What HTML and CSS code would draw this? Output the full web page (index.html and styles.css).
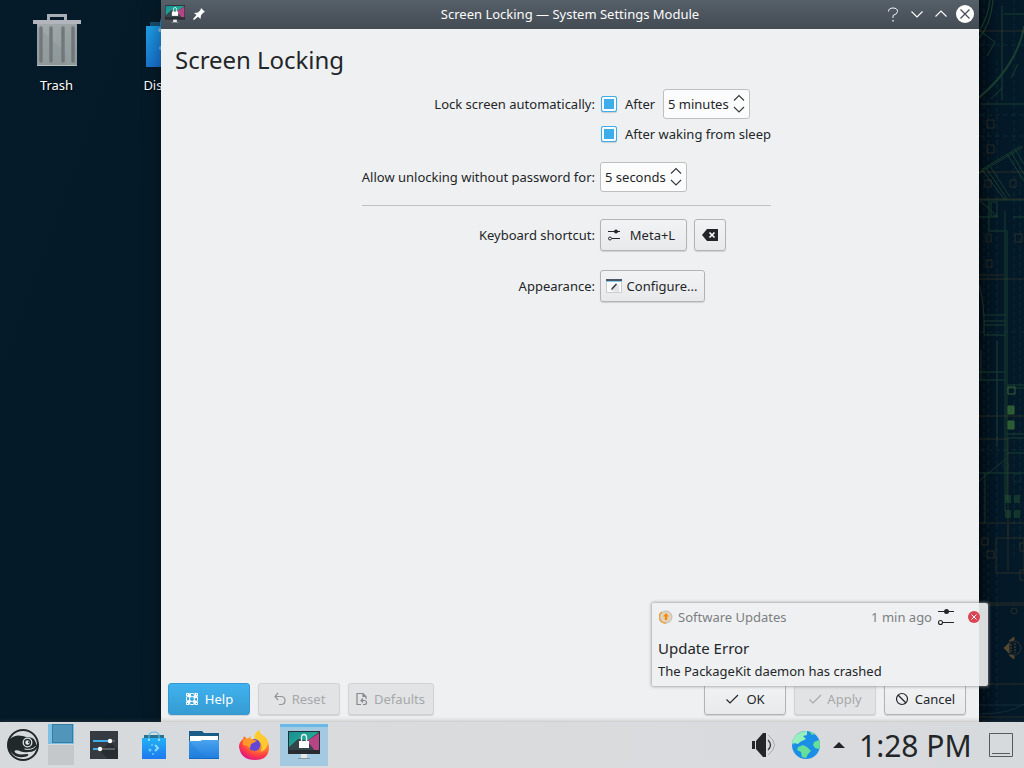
FILE: index.html
```html
<!DOCTYPE html>
<html lang="en">
<head>
<meta charset="utf-8">
<title>Screen Locking</title>
<link rel="stylesheet" href="styles.css">
</head>
<body>
<svg class="defs" width="0" height="0" aria-hidden="true">
  <defs>
    <linearGradient id="teal" x1="0" y1="0" x2="1" y2="1"><stop offset="0" stop-color="#168d94"/><stop offset="1" stop-color="#2fbf92"/></linearGradient>
    <linearGradient id="blue" x1="0" y1="0" x2="0" y2="1"><stop offset="0" stop-color="#22b1f7"/><stop offset="1" stop-color="#1d78ee"/></linearGradient>
    <linearGradient id="folder" x1="0" y1="0" x2="0" y2="1"><stop offset="0" stop-color="#4aa4ee"/><stop offset="1" stop-color="#1f7be0"/></linearGradient>
    <linearGradient id="deep" x1="0" y1="0" x2="1" y2="1"><stop offset="0" stop-color="#1d9fe6"/><stop offset="1" stop-color="#1450b8"/></linearGradient>
    <linearGradient id="metal" x1="0" y1="0" x2="1" y2="1"><stop offset="0" stop-color="#a5abae"/><stop offset="1" stop-color="#8e9998"/></linearGradient>
    <symbol id="locker" viewBox="0 0 32 28">
      <rect width="32" height="23" fill="#272c30"/>
      <path d="M1 1h30v18H1z" fill="#29343b"/>
      <path d="M1 1h30L19 10 11 8 1 17z" fill="url(#teal)"/>
      <path d="M31 2v17h-5L19 10z" fill="#b64585"/>
      <path d="M10 8l9 2 7 9H1v-3z" fill="#34454b"/>
      <path d="M13.500 11V6.500q0-3 2.500-3t2.500 3V11" fill="none" stroke="#eef4f5" stroke-width="1.300"/>
      <rect x="11" y="10" width="10" height="7" fill="#fff"/>
      <path d="M13 23h6v4h-6z" fill="#e5e8e9"/><path d="M10 27h12v1H10z" fill="#8b979d"/>
    </symbol>
    <symbol id="sliders" viewBox="0 0 18 18">
      <path d="M1 3.500h16M6 14.500H17" stroke="#232629" stroke-width="1.100"/>
      <circle cx="9.500" cy="3.500" r="2.500" fill="#232629"/><circle cx="3.500" cy="14.500" r="2" fill="none" stroke="#232629" stroke-width="1.100"/>
    </symbol>
    <symbol id="arrows" viewBox="0 0 12 20">
      <path d="M1 6.500l5-5 5 5M1 13l5 5 5-5" fill="none" stroke="#34383b" stroke-width="1.100"/>
    </symbol>
    <symbol id="check" viewBox="0 0 14 14"><path d="M1.500 7.500l3.500 3.500L13 3" fill="none" stroke="currentColor" stroke-width="1.200"/></symbol>
  </defs>
</svg>
<main class="desktop">
  <svg class="blueprint" viewBox="979 0 45 722" fill="none" stroke-width="1">
    <g stroke="#2f6336" opacity=".5">
      <path d="M990 0q-2 18-11 31M993 0q-2 24-14 38M1024 26q-8 40-45 71M1024 30q-10 40-45 68" stroke-width="1.200"/>
      <path d="M979 30l16 12-8 14M1011 78l7-14M991 99l12-12M1024 104h-43M1024 14h-20M1002 6v94"/>
      <path d="M981 170l40-24M979 173l44-26M982 170l23 30M986 168l21 31M990 166l20 31M1007 154l17 27M1011 152l13 22M1015 149l9 15M979 200h45M989 200v31h16M991 202v14h6v-14h-6M979 217h19l-18-16M1013 217h11M1005 211v300M1007 230v270"/>
      <path d="M979 285q6 18 5 50h21M984 315h22M984 321h22M984 325h22M979 380h27M979 372h27M981 380v-30M1007 385h17M1007 388h17M979 473h45M1007 434h17M1007 438h17M985 473v50M979 481l28-23M1007 453h17M997 341v105"/>
    </g>
    <g stroke="#1c4f43" opacity=".3"><path d="M984 0v722M988 100v600M997 60v650M1014 0v560M1020 150v400M979 45h45M979 115h45M979 136h45M979 332h45M979 450h45" stroke-dasharray="5 3"/><circle cx="1006" cy="466" r="3"/><circle cx="1017" cy="478" r="4"/></g>
    <g stroke="#624a26" opacity=".4"><path d="M979 31h45M979 172h45M979 199h45M979 275h25M979 279h45M979 416h45M979 439h30M1008 440v96M979 523h45M1008 525v46M979 603h45M979 605h45M979 684h45M979 717h45"/><path d="M987 120h7v8h-7zM987 145h7v8h-7zM985 180h6v7h-6zM1010 180h6v7h-6zM986 234h5v8h-5zM1015 234h7v8h-7zM986 260h6v7h-6zM982 538h6v7h-6zM987 551h7v7h-7zM996 538h28v35h-28zM1020 543h5v8h-5zM1020 570h5v10h-5z"/><circle cx="1014" cy="611" r="3"/></g>
    <g stroke="#44763a" opacity=".75"><path d="M1008 387h7v7h-7z"/><path fill="#367036" d="M1008 406h6v8h-6zM1008 421h6v8h-6z"/><path fill="#265a32" stroke="none" opacity=".6" d="M1005 495h6v8h-6zM1014 495h6v8h-6zM1005 510h6v8h-6zM1014 510h6v8h-6z"/></g>
    <g stroke="#7a5832" opacity=".7"><path fill="#7a5832" d="M1004 648l5-5v10zM1009 641l5-4v3zM1009 655l5 4v-3z"/><circle cx="1014" cy="648" r="7" opacity=".6"/><path d="M1011 644v8M1015 643v10" stroke-dasharray="2 1"/></g>
    <path d="M979 714q30 0 45-10M979 705h45" stroke="#304c50" opacity=".4"/>
  </svg>

  <section class="icons">
    <div class="launcher">
      <svg width="48" height="54" viewBox="0 0 48 54"><path d="M15.500 7V1.500h17V7" fill="none" stroke="#a8adb3" stroke-width="3"/><path d="M4 9h40v43H4z" fill="url(#metal)"/><path d="M4 12l29 27v13H4z" fill="#7e8889" opacity=".23"/><path d="M8 14v33M18 14v33M30 14v33M40 14v33" stroke="#71777b" stroke-width="3.400" stroke-linecap="round"/><path d="M0 6h48v4H0z" fill="#b2b5bb"/><path d="M4 51.500h40" stroke="#b9c0be"/></svg>
      <span>Trash</span>
    </div>
    <div class="launcher second">
      <svg width="48" height="54" viewBox="0 0 48 54"><path d="M4 13V8h11q1-6 9-8 8 2 9 8h11v5z" fill="#194d70"/><path d="M15 14V8q1-8 9-8t9 8v6" fill="none" stroke="#1987c8" stroke-width="2"/><path d="M0 12h48v41H0z" fill="url(#deep)"/><circle cx="14" cy="16" r="2" fill="#76b6df"/><circle cx="15" cy="34" r="2" fill="#68b0ef"/></svg>
      <span>Discover</span>
    </div>
  </section>

  <section class="window">
    <header class="titlebar">
      <div class="title-left"><svg width="20" height="18" preserveAspectRatio="none"><use href="#locker"/></svg><svg width="12" height="12" viewBox="0 0 12 12"><path d="M8 0l4 4-1.500.5L8 7.200 7.500 11 5 8.700 1 12l-1-1 3.500-4L1 5l4-.5L7.500 2z" fill="#fff"/></svg></div>
      <h1>Screen Locking — System Settings Module</h1>
      <div class="title-right">
        <svg width="12" height="16" viewBox="0 0 12 16" fill="none" stroke="#f2f4f5"><path d="M1.500 5.500q0-3.500 4.500-3.500t4.500 3.500Q10.500 8 6 9.500V12"/><path d="M6 14v1.500" stroke-width="1.400"/></svg>
        <svg width="12" height="12" viewBox="0 0 12 12" fill="none" stroke="#fff" stroke-width="1.100"><path d="M.5 3.500L6 9l5.500-5.500"/></svg>
        <svg width="12" height="12" viewBox="0 0 12 12" fill="none" stroke="#fff" stroke-width="1.100"><path d="M.5 8.500L6 3l5.500 5.500"/></svg>
        <svg width="18" height="18" viewBox="0 0 18 18"><circle cx="9" cy="9" r="9" fill="#fff"/><path d="M4.500 4.500l9 9M13.500 4.500l-9 9" stroke="#424a52" stroke-width="1.200"/></svg>
      </div>
    </header>
    <h2>Screen Locking</h2>
    <div class="form">
      <label>Lock screen automatically:</label>
      <div class="field"><i class="checkbox"></i><span class="after">After</span><div class="spin">5 minutes<svg width="12" height="20"><use href="#arrows"/></svg></div></div>
      <label></label>
      <div class="field"><i class="checkbox"></i><span>After waking from sleep</span></div>
      <label class="unlock">Allow unlocking without password for:</label>
      <div class="field unlock"><div class="spin">5 seconds<svg width="12" height="20"><use href="#arrows"/></svg></div></div>
      <hr>
      <label>Keyboard shortcut:</label>
      <div class="field"><button class="shortcut"><svg width="14" height="14" viewBox="0 0 14 14"><path d="M1 3.500h12M5 10.500h8" stroke="#232629" stroke-width="1.100"/><circle cx="9" cy="3.500" r="2" fill="#232629"/><circle cx="3" cy="10.500" r="1.500" fill="none" stroke="#232629"/></svg>Meta+L</button><button class="clear"><svg width="16" height="12" viewBox="0 0 16 12"><path d="M0 6l5-6h11v12H5z" fill="#232629"/><path d="M7.500 3.500l5 5M12.500 3.500l-5 5" stroke="#fff" stroke-width="1.600"/></svg></button></div>
      <label class="appearance">Appearance:</label>
      <div class="field appearance"><button class="configure"><svg width="16" height="16" viewBox="0 0 16 16"><path d="M0 1h16v14H0z" fill="#fafafa"/><path d="M0 1h16v2H0z" fill="#485763"/><path d="M0 3.500h16" stroke="#85cce8"/><path d="M.5 4v10.500h15V4" fill="none" stroke="#c9cdcf"/><path d="M5 13l6-7 2 2v6z" fill="#e0e4e4"/><path d="M5 12l.7-2L10 5.500l1 1-4.300 4.700z" fill="#31363b"/></svg>Configure...</button></div>
    </div>
    <footer class="actions">
      <button class="help"><svg width="14" height="14" viewBox="0 0 14 14" fill="none" stroke="#fff"><circle cx="7" cy="7" r="4.200" stroke-width="3.400" stroke-dasharray="3.300 3.297" stroke-dashoffset="-1.650"/><circle cx="7" cy="7" r="5.600"/><circle cx="7" cy="7" r="2.500"/><path d="M1.500 4V1.500H4M10 1.500h2.500V4M1.500 10v2.500H4M10 12.500h2.500V10"/></svg>Help</button>
      <button disabled><svg width="14" height="14" viewBox="0 0 14 14" fill="none" stroke="#929597" stroke-width="1.200"><path d="M5 1L2 4.500 5 8M2 4.500h6q4 0 4 4t-4 4H6"/></svg>Reset</button>
      <button class="defaults" disabled><svg width="14" height="14" viewBox="0 0 14 14" fill="none" stroke="#85898b" stroke-width="1.200"><path d="M6 12.500H2v-11h6l3 3V7M8 1.500v3h3M8 6.500L6 8.500l2 2M6.500 8.500h3q2 0 2 2t-2 2H8"/></svg>Defaults</button>
      <span class="spacer"></span>
      <button><svg width="14" height="14"><use href="#check"/></svg>OK</button>
      <button disabled><svg width="14" height="14"><use href="#check"/></svg>Apply</button>
      <button class="cancel"><svg width="14" height="14" viewBox="0 0 14 14" fill="none" stroke="#232629" stroke-width="1.200"><circle cx="7" cy="7" r="5.500"/><path d="M3 3l8 8"/></svg>Cancel</button>
    </footer>
  </section>

  <aside class="notification">
    <header><svg width="14" height="14" viewBox="0 0 14 14"><circle cx="7" cy="7" r="6" fill="#e4d3b7" stroke="#b7bdc1"/><path d="M7 13A6 6 0 0 1 3 2" fill="none" stroke="#f39b32" stroke-width="1.300"/><path d="M7 3l3 3.500H8.200V10H5.800V6.500H4z" fill="#f58a13"/></svg><span>Software Updates</span><time>1 min ago</time><svg class="tune" width="18" height="18" viewBox="0 0 18 18"><use href="#sliders"/></svg><svg class="dismiss" width="12" height="12" viewBox="0 0 12 12"><circle cx="6" cy="6" r="6" fill="#da4453"/><path d="M3.500 3.500l5 5M8.500 3.500l-5 5" stroke="#fff"/></svg></header>
    <h3>Update Error</h3>
    <p>The PackageKit daemon has crashed</p>
  </aside>

  <nav class="panel">
    <svg class="menu" width="32" height="32" viewBox="0 0 32 32"><circle cx="16" cy="16" r="15" fill="none" stroke="#22292b" stroke-width="2"/><path d="M2 11q3-4 9-4.500l5 .5 3 1q8 0 9 4l2.500 6q-2 5-9 5-6 1-10-1.500-4-1-4 1 1 2.500 7 3l6-.5q2 1-1 2.500-9 2-13-2-5-4-6-8z" fill="#22292b"/><circle cx="20.500" cy="13.500" r="4.300" fill="#22292b" stroke="#dce0e2" stroke-width="1.300"/><circle cx="20.500" cy="13.500" r="2.200" fill="#e4e7e8"/><path d="M21 12.500h1.500v1.500H21z" fill="#22292b"/><path d="M28.500 17.500q-4 4-11 2.500" fill="none" stroke="#dce0e2"/></svg>
    <div class="pager"><div><i></i></div><div></div></div>
    <div class="tasks">
      <svg width="28" height="28" viewBox="0 0 28 28"><path d="M0 0h28v28H0z" fill="#363b41"/><path d="M10 20l10-9 8 8v9H18z" fill="#202428" opacity=".6"/><path d="M3 10h22M3 18h22" stroke="#596066" stroke-width="2"/><path d="M3 10h16M3 18h7" stroke="#3daee9" stroke-width="2"/><circle cx="20" cy="10" r="2.200" fill="#fff"/><circle cx="10" cy="18" r="2.200" fill="#fff"/></svg>
      <svg width="24" height="28" viewBox="0 0 24 28"><path d="M2 7V4h20v3z" fill="#29718d"/><path d="M0 7h24v21H0z" fill="url(#blue)"/><path d="M7 9V5q0-4 5-4t5 4v4" fill="none" stroke="#58bceb" stroke-width="1.200"/><circle cx="7" cy="9" r="1" fill="#b5edff"/><circle cx="17" cy="9" r="1" fill="#b5edff"/><path d="M13 14l3 3-3 3" stroke="#8bdcff" stroke-width="2" fill="none"/><g fill="#6ccdf8"><circle cx="10" cy="14" r="1"/><circle cx="8" cy="19" r="1.500"/><circle cx="11" cy="23" r="1"/></g></svg>
      <svg width="30" height="28" viewBox="0 0 30 28"><path d="M0 0h13l2 2h15v14H0z" fill="#195c87"/><path d="M1 5h28v8H1z" fill="#fff"/><path d="M0 10h11l2-1h17v19H0z" fill="url(#folder)"/><path d="M0 10l18 18H0z" fill="#1f7fd4" opacity=".4"/><path d="M0 27.500h30" stroke="#126ac1"/></svg>
      <svg width="30" height="32" viewBox="0 0 30 32"><defs><radialGradient id="fire" cx=".7" cy=".15" r=".9"><stop offset=".12" stop-color="#ffe83b"/><stop offset=".45" stop-color="#ff9c25"/><stop offset=".8" stop-color="#ff3c45"/><stop offset="1" stop-color="#df1686"/></radialGradient></defs><path d="M5 7l3 3 4-3-1 4 4-1q0-6 5-9 0 5 4 8l3 0q3 5 3 9 0 13-14 13T0 18q0-5 4-8z" fill="url(#fire)"/><path d="M20 1q-5 4-4 8 7 2 7 8 0 4-2 6 7-2 8-9 0-4-4-7-4-2-5-6z" fill="#ffc930"/><circle cx="15.500" cy="16" r="6" fill="#6547d5"/><path d="M4 11q4-3 9-1l5 2-6 3-1 4q-3-3-7-3z" fill="#ff9828"/></svg>
      <div class="active"><svg width="32" height="28"><use href="#locker"/></svg></div>
    </div>
    <span class="spacer"></span>
    <svg class="volume" width="25" height="26" viewBox="0 0 25 26"><path d="M0 9h3v8H0zM4 9l7-8h3v24h-3l-7-8z" fill="#232629"/><path d="M16 8q5 5 0 10" fill="none" stroke="#33383a" stroke-width="1.300"/><path d="M16 3q13 10 0 20" fill="none" stroke="#a8abad"/></svg>
    <svg class="globe" width="28" height="28" viewBox="0 0 28 28"><circle cx="14" cy="14" r="14" fill="#1b8ee6"/><path d="M4 4q5-4 11-4l0 4-4 1 3 3-6 3-2 2-4-1-1 2-1-3q1-4 4-7z" fill="#95f0bb"/><path d="M17 0l6 3-3 1zM6 16l5-2 4 2 4 4-3 3-2 4-4-1-1-5-4-2zM22 11l5-2q2 4 0 9l-4-1-2-3z" fill="#66df98"/></svg>
    <svg class="tray" width="12" height="6" viewBox="0 0 12 6"><path d="M0 6l6-6 6 6z" fill="#232629"/></svg>
    <time>1:28 PM</time>
    <svg class="show" width="24" height="24" viewBox="0 0 24 24" fill="none" stroke="#555c60"><path d="M.5.5h23v23H.5zM3 20.500h18"/></svg>
  </nav>
</main>
</body>
</html>
```
FILE: styles.css
```css
* { box-sizing: border-box; }
body { margin: 0; overflow: hidden; font: 13px/18px "Noto Sans", sans-serif; color: #232629; }
svg { display: block; flex: none; }
.defs { position: absolute; }
h1, h2, h3, p { margin: 0; font-weight: 400; }
.desktop { position: relative; width: 1024px; height: 768px; overflow: hidden; background: linear-gradient(110deg, #051b29, #051a28 15%, #031725); }
.blueprint { position: absolute; left: 979px; top: 0; width: 45px; height: 722px; background: linear-gradient(90deg, #020d17, #041827 40%, #041a29); }
.icons { display: flex; padding: 14px 0 0; }
.launcher { width: 113px; display: flex; flex-direction: column; align-items: center; gap: 8px; color: #fff; text-shadow: 1px 1px 2px #000; }
.launcher:first-child { padding-left: 1px; }
.launcher:first-child span { margin-right: 1px; }
.second span { margin-right: 1px; }
.second { padding-left: 1px; }
.window { position: absolute; left: 161px; top: 0; width: 818px; height: 722px; display: flex; flex-direction: column; background: #eff0f1; box-shadow: 0 0 18px #0005; }
.titlebar { height: 29px; padding-bottom: 1px; display: grid; grid-template-columns: 92px 1fr 92px; align-items: center; background: linear-gradient(#566069, #434b53); color: #fcfcfc; }
.titlebar h1 { font-size: 13px; line-height: 28px; text-align: center; }
.title-left { display: flex; align-items: center; gap: 8px; padding-left: 4px; }
.title-right { display: flex; align-items: center; gap: 11px; }
.title-right svg:nth-child(n+2) { margin-left: 1px; }
.title-right svg:last-child { margin-left: -2px; }
h2 { padding: 14px 14px 0; font-size: 24px; line-height: 34px; height: 60px; letter-spacing: -.03px; }
.form { width: 409px; margin-left: 201px; display: grid; grid-template-columns: 233px 171px; column-gap: 5px; grid-template-rows: 30px 30px 43px 27px 32px 51px; align-items: center; white-space: nowrap; }
.form label { justify-self: end; }
.field { display: flex; align-items: center; }
.checkbox { width: 16px; height: 16px; margin: 0 8px 0 1px; border: 1px solid #3daee9; border-radius: 2px; background: #3daee9; box-shadow: inset 0 0 0 2px #fcfcfc, 0 1px 1px #ccc; }
.after { width: 38px; }
.spin { width: 87px; height: 30px; display: flex; align-items: center; justify-content: space-between; padding: 0 4px; border: 1px solid #bdbfc1; border-radius: 3px; background: #fcfcfc; }
.unlock, .appearance { align-self: end; }
label.unlock { padding-bottom: 6px; }
hr { grid-column: 1 / -1; width: 100%; height: 1px; margin: 0; border: 0; background: #bfc0c2; }
button { font: inherit; color: inherit; height: 32px; display: flex; align-items: center; justify-content: center; gap: 8px; padding: 0; border: 1px solid #b1b3b5; border-radius: 3px; background: linear-gradient(#f2f3f4, #e8e9ea); box-shadow: 0 1px 1px #0002; }
.shortcut { width: 87px; gap: 9px; padding-right: 5px; }
.clear { width: 32px; margin-left: 7px; }
.configure { width: 105px; gap: 5px; padding-right: 2px; }
label.appearance { padding-bottom: 7px; }
.actions { height: 39px; margin-top: auto; display: flex; padding: 0 13px 0 7px; gap: 8px; }
.actions button { width: 82px; gap: 7px; }
.actions .help { color: #fff; background: linear-gradient(#3fb2ef, #369bd2); border-color: #3499d3; gap: 6px; }
.actions button:disabled { color: #a6a8aa; background: #e2e3e5; border-color: #d0d2d3; gap: 5px; }
.actions .defaults { width: 86px; padding-right: 2px; }
.actions .cancel { gap: 6px; }
.spacer { flex: 1; }
.notification { position: absolute; left: 652px; top: 603px; width: 336px; height: 83px; padding: 4px 8px 0 6px; background: #eff0f1e8; border-radius: 2px; box-shadow: 0 0 3px 1px #8b8d8faa; }
.notification header { display: flex; align-items: center; height: 20px; color: #7c7f81; padding-left: 1px; gap: 5px; }
.notification time { margin-left: auto; }
.dismiss { margin-left: 8px; }
.notification h3 { font-size: 15px; line-height: 22px; margin-top: 10px; }
.notification p { margin-top: 3px; }
.panel { position: absolute; left: 0; top: 722px; width: 1024px; height: 46px; display: flex; align-items: center; padding: 0 11px 0 7px; background: linear-gradient(90deg, #d6dadd, #dadbdd 45%, #d7dadd); box-shadow: 0 0 5px #5557; }
.pager { align-self: flex-start; width: 26px; margin: 2px 0 0 9px; }
.pager div { height: 20px; margin-bottom: 1px; background: #c5c8ca; }
.pager div:first-child { background: #7abfe5; padding-left: 4px; }
.pager i { display: block; width: 21px; height: 19px; background: #5195bb; border: 1px solid #377b9f; }
.tasks { display: grid; grid-template-columns: 50px 50px 50px 50px 50px; align-items: center; justify-items: center; margin-left: 5px; height: 46px; }
.active { width: 48px; height: 42px; display: flex; justify-content: center; padding-top: 4px; border-top: 3px solid #68b9e6; background: #a3cae1; }
.volume { margin-right: 15px; }
.globe { margin-right: 13px; }
.tray { margin-right: 14px; }
.panel time { width: 112px; padding-top: 2px; font-size: 30px; line-height: 44px; white-space: nowrap; }
.show { margin-left: 18px; }
```
